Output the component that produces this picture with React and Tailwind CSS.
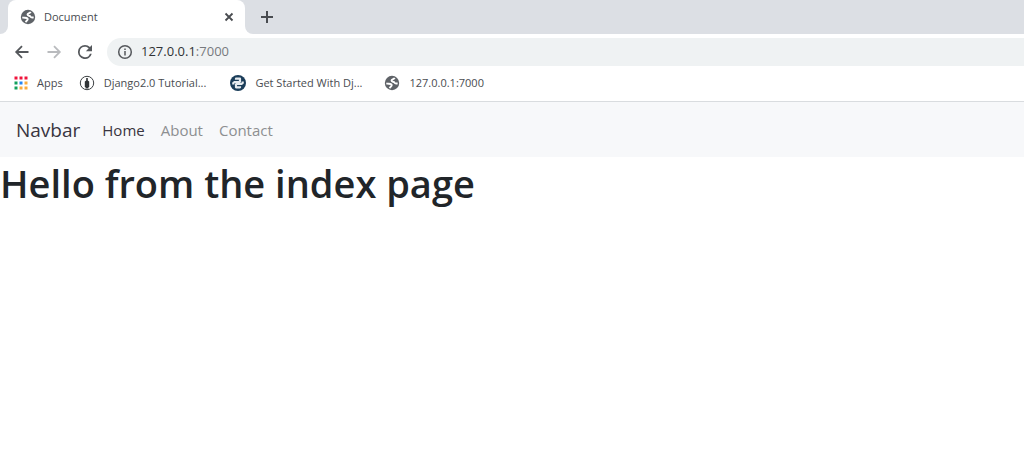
import React from "react";

function Globe() {
  return (
    <svg viewBox="0 0 16 16" className="size-4 shrink-0" aria-hidden="true">
      <circle cx="8" cy="8" r="7.2" fill="#5f6368" />
      <g fill="none" stroke="#fff" strokeWidth="1.9" strokeLinejoin="round">
        <path d="M10.800 3C9.800 4.300 7.500 3.900 7.500 5.600 7.500 7.200 9.900 6.200 10.500 7.700 11 8.700 12.300 8.600 13.600 8.300" />
        <path d="M2.300 8.400C4.600 9.100 7.800 8.500 7.700 10.300 7.600 11.700 6.300 11.200 5.800 13.300" />
      </g>
    </svg>
  );
}

function ArrowLeft({ className }) {
  return (
    <svg viewBox="0 0 16 16" className={className} fill="none" stroke="currentColor" strokeWidth="1.8" aria-hidden="true">
      <path d="M14.5 8H2M8 2.200 2.200 8 8 13.800" />
    </svg>
  );
}

function Apps() {
  const rows = [
    ["#f0143c", "#f0143c", "#f0143c"],
    ["#12a05c", "#2385f5", "#fbab3c"],
    ["#12a05c", "#fbab3c", "#fbab3c"],
  ];
  return (
    <svg viewBox="0 0 14 14" className="size-3.5 shrink-0" aria-hidden="true">
      {rows.map((row, y) =>
        row.map((fill, x) => <rect key={`${x}-${y}`} x={x * 5 + 0.5} y={y * 5 + 0.5} width="3" height="3" fill={fill} />)
      )}
    </svg>
  );
}

function Pen() {
  return (
    <svg viewBox="0 0 16 16" className="size-4 shrink-0" aria-hidden="true">
      <circle cx="8" cy="8" r="6.7" fill="#fff" stroke="#3c4043" strokeWidth="1" />
      <path d="M7.200 3h1.600v2.500l1.400 1v5.500H9.500v1.500h-3V12H5.800V6.500l1.400-1z" fill="#303336" />
    </svg>
  );
}

function Snake() {
  return (
    <svg viewBox="0 0 16 16" className="size-4 shrink-0" aria-hidden="true">
      <circle cx="8" cy="8" r="8" fill="#1b3d59" />
      <g fill="none" stroke="#e6ebef" strokeWidth="2.200" strokeLinejoin="round">
        <path d="M6 4.700V3.700H10V6.400L9.200 7.200H4.200L3.300 8V9.600" />
        <path d="M10 11.300V12.300H6V9.600L6.800 8.800H11.800L12.700 8V6.400" />
      </g>
    </svg>
  );
}

function Bookmark({ icon, children, className = "" }) {
  return (
    <a href="#" className={`flex items-center gap-[9px] whitespace-nowrap ${className}`}>
      {icon}
      <span>{children}</span>
    </a>
  );
}

export default function App() {
  return (
    <div className="min-h-screen bg-white font-['Open_Sans',sans-serif] text-[#212529]">
      <header className="border-b border-[#d9dcdf] text-[#494c50]">
        <div className="flex h-[34px] items-stretch bg-[#dcdfe4]">
          <div className="w-2 bg-white">
            <div className="h-full rounded-br-lg bg-[#dcdfe4]" />
          </div>
          <div className="flex w-[237px] items-center gap-2 rounded-t-lg bg-white pr-2 pl-3">
            <Globe />
            <span className="flex-1 text-[11px]">Document</span>
            <button aria-label="Close tab" className="grid size-4 place-items-center">
              <svg viewBox="0 0 10 10" className="size-2.5" fill="none" stroke="currentColor" strokeWidth="1.8">
                <path d="m1.500 1.500 7 7M8.500 1.500l-7 7" />
              </svg>
            </button>
          </div>
          <div className="flex-1 bg-white">
            <div className="flex h-full items-center rounded-bl-lg bg-[#dcdfe4] pl-4">
              <button aria-label="New tab">
                <svg viewBox="0 0 12 12" className="size-3" fill="none" stroke="currentColor" strokeWidth="2">
                  <path d="M6 0v12M0 6h12" />
                </svg>
              </button>
            </div>
          </div>
        </div>
        <div className="flex h-[35px] items-center pl-3.5 text-[#55585c]">
          <button aria-label="Back"><ArrowLeft className="size-4" /></button>
          <button aria-label="Forward" className="ml-4 text-[#b9bbbe]"><ArrowLeft className="size-4 rotate-180" /></button>
          <button aria-label="Reload" className="ml-4">
            <svg viewBox="4 4 16 16" className="size-3.5" fill="currentColor">
              <path d="M17.650 6.350A7.960 7.960 0 0 0 12 4a8 8 0 1 0 7.730 10h-2.080A6 6 0 1 1 12 6c1.660 0 3.140.69 4.220 1.780L13 11h7V4z" />
            </svg>
          </button>
          <div className="ml-[15px] flex h-7 flex-1 items-center gap-2 rounded-l-full bg-[#eff2f3] pl-2.5">
            <svg viewBox="0 0 16 16" className="size-4" fill="none" stroke="currentColor" strokeWidth="1.5" aria-hidden="true">
              <circle cx="8" cy="8" r="6.300" />
              <path d="M8 7v4.500M8 4.500v1.500" />
            </svg>
            <div className="text-[13px]">
              <span className="text-[#303236]">127.0.0.1</span><span className="text-[#777a7e]">:7000</span>
            </div>
          </div>
        </div>
        <nav aria-label="Bookmarks" className="flex h-8 items-center pb-1 pl-3.5 text-[11px]">
          <Bookmark icon={<Apps />}>Apps</Bookmark>
          <Bookmark icon={<Pen />} className="ml-4">Django2.0 Tutorial...</Bookmark>
          <Bookmark icon={<Snake />} className="ml-6">Get Started With Dj...</Bookmark>
          <Bookmark icon={<Globe />} className="ml-[22px]">127.0.0.1:7000</Bookmark>
        </nav>
      </header>
      <nav aria-label="Main" className="flex h-[55px] items-center gap-[22px] bg-[#f7f8fa] px-4 pt-0.5">
        <a href="#" className="text-[19px] text-[#39353f]">Navbar</a>
        <div className="flex gap-4 text-[15px] text-[#8d8f91]">
          <a href="#" aria-current="page" className="text-[#39353f]">Home</a>
          <a href="#">About</a>
          <a href="#">Contact</a>
        </div>
      </nav>
      <main>
        <h1 className="text-[38px] leading-[52px] font-semibold">Hello from the index page</h1>
      </main>
    </div>
  );
}
